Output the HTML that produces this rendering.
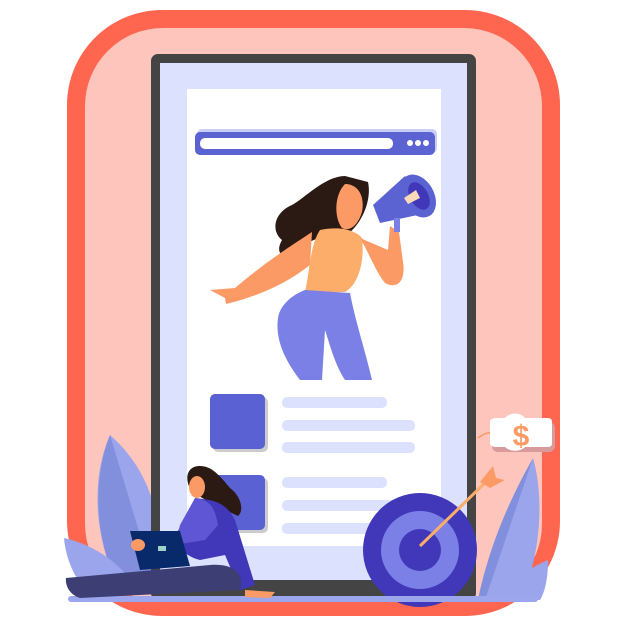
<!DOCTYPE html>
<html><head><style>html,body{margin:0;padding:0;background:#fff}svg{display:block}</style></head><body>
<svg width="626" height="626" viewBox="0 0 626 626" xmlns="http://www.w3.org/2000/svg">
<rect x="67" y="10" width="493" height="606" rx="95" fill="#FF6650"/>
<rect x="85" y="28" width="457" height="574" rx="78" fill="#FDC5BC"/>
<path d="M110 435 C90 480 95 540 118 585 L160 585 C165 520 150 470 110 435Z" fill="#9AA5EC"/>
<path d="M110 435 L155 585 L118 585 C95 540 92 480 110 435Z" fill="#828FDC"/>
<path d="M64 538 C95 545 125 565 140 595 L90 595 C75 580 66 560 64 538Z" fill="#9AA5EC"/>
<rect x="151" y="54" width="325" height="546" rx="7" fill="#444"/>
<rect x="160" y="63" width="307" height="517" fill="#DCE2FD"/>
<rect x="187" y="89" width="254" height="457" fill="#fff"/>
<rect x="197" y="129" width="240" height="24" rx="5" fill="#C9CEF5"/>
<rect x="195" y="132" width="240" height="23" rx="5" fill="#5B63D3"/>
<rect x="200" y="138" width="193" height="11" rx="5" fill="#fff"/>
<circle cx="410" cy="143" r="3" fill="#fff"/><circle cx="418" cy="143" r="3" fill="#fff"/><circle cx="426" cy="143" r="3" fill="#fff"/>
<rect x="213" y="397" width="55" height="55" rx="5" fill="#ccc"/>
<rect x="210" y="394" width="55" height="55" rx="5" fill="#5A62D3"/>
<rect x="282" y="397" width="105" height="11" rx="5" fill="#DCE2FD"/>
<rect x="282" y="420" width="133" height="11" rx="5" fill="#DCE2FD"/>
<rect x="282" y="442" width="133" height="11" rx="5" fill="#DCE2FD"/>
<rect x="213" y="478" width="55" height="55" rx="5" fill="#ccc"/>
<rect x="210" y="475" width="55" height="55" rx="5" fill="#5A62D3"/>
<rect x="282" y="477" width="105" height="11" rx="5" fill="#DCE2FD"/>
<rect x="282" y="500" width="133" height="11" rx="5" fill="#DCE2FD"/>
<rect x="282" y="523" width="133" height="11" rx="5" fill="#DCE2FD"/>
<path d="M345 176 C325 176 305 198 292 205 C275 212 270 230 282 240 C275 252 282 258 290 256 C305 242 325 232 345 236 C362 225 372 200 368 182Z" fill="#2B1A14"/>
<path d="M345 184 C358 184 365 196 362 212 C358 225 350 232 342 228 C334 218 334 195 345 184Z" fill="#FC9A66"/>
<path d="M312 232 C300 240 265 262 235 288 L210 290 L225 298 L226 304 C255 297 285 285 310 265Z" fill="#FC9A66"/>
<path d="M320 230 C340 226 355 230 362 238 C365 262 358 285 345 292 L305 292 C310 270 310 245 320 230Z" fill="#FCAD6A"/>
<path d="M360 238 C370 255 376 272 385 283 C398 290 406 280 403 262 L399 232 L390 226 L388 250 Z" fill="#FC9A66"/>
<path d="M305 290 L350 293 C355 320 365 350 372 380 L345 380 C335 365 330 345 325 330 L322 380 L300 380 C285 360 275 340 278 318 C280 305 292 295 305 290Z" fill="#7A80E6"/>
<path d="M373 205 L405 176 L432 212 L380 223Z" fill="#5B63D3"/>
<ellipse cx="418" cy="196" rx="16" ry="23" transform="rotate(-30 418 196)" fill="#5B63D3"/>
<ellipse cx="419" cy="196" rx="9" ry="15" transform="rotate(-30 419 196)" fill="#4038B8"/>
<path d="M404 198 L416 190 L420 198 L408 204Z" fill="#FCD9B8"/>
<rect x="394" y="218" width="6" height="14" fill="#7A80E6"/>
<circle cx="420" cy="550" r="57" fill="#4038B8"/>
<circle cx="420" cy="550" r="39" fill="#7A80E6"/>
<circle cx="420" cy="550" r="21" fill="#4038B8"/>
<line x1="420" y1="546" x2="490" y2="478" stroke="#FCAD6A" stroke-width="3"/>
<path d="M480 482 L493 466 L496 478 L505 480 L490 488Z" fill="#FC9A66"/>
<path d="M533 458 C520 490 490 540 478 600 L520 600 C540 560 545 500 533 458Z" fill="#9AA5EC"/>
<path d="M533 458 L485 600 L478 600 C490 540 515 490 533 458Z" fill="#828FDC"/>
<path d="M548 560 C525 570 505 585 500 600 L540 600 C546 590 548 575 548 560Z" fill="#9AA5EC"/>
<path d="M478 438 C485 432 492 432 497 433" stroke="#FC9A66" stroke-width="1.5" fill="none"/>
<rect x="492" y="422" width="63" height="30" rx="6" fill="#D89A9A"/>
<path d="M497 418 L505 418 C510 412 520 412 525 418 L548 418 Q552 418 552 422 L552 443 Q552 447 548 447 L525 447 C520 452 510 452 505 447 L497 447 Q490 447 490 443 L490 422 Q490 418 497 418Z" fill="#fff"/>
<text x="521" y="446" font-family="Liberation Sans, sans-serif" font-size="30" font-weight="bold" fill="#FC9A66" text-anchor="middle">$</text>
<rect x="68" y="596" width="470" height="6" rx="3" fill="#9CA6EC"/>
<path d="M200 466 C186 466 184 480 192 492 C205 500 225 510 238 516 C245 510 240 495 230 488 C220 476 212 466 200 466Z" fill="#2B1A14"/>
<ellipse cx="197" cy="487" rx="8" ry="11" fill="#FC9A66"/>
<path d="M195 498 C210 500 225 500 235 520 L255 585 L240 590 L225 555 L200 560 C180 555 175 540 175 535 L185 520 C195 510 195 505 195 498Z" fill="#4038B8"/>
<path d="M195 498 C212 500 215 510 218 525 L205 540 L175 545 L180 525Z" fill="#5F56D6"/>
<path d="M130 531 L180 531 L190 566 L140 570Z" fill="#082A6B"/>
<rect x="158" y="546" width="8" height="5" fill="#9BD3C8"/>
<ellipse cx="138" cy="545" rx="7" ry="6" fill="#FC9A66"/>
<path d="M66 578 L210 565 C235 563 245 575 240 590 L80 598 C70 595 65 586 66 578Z" fill="#3C3E74"/>
<path d="M245 590 L275 592 L270 598 L245 597Z" fill="#FC9A66"/>
</svg>
</body></html>
